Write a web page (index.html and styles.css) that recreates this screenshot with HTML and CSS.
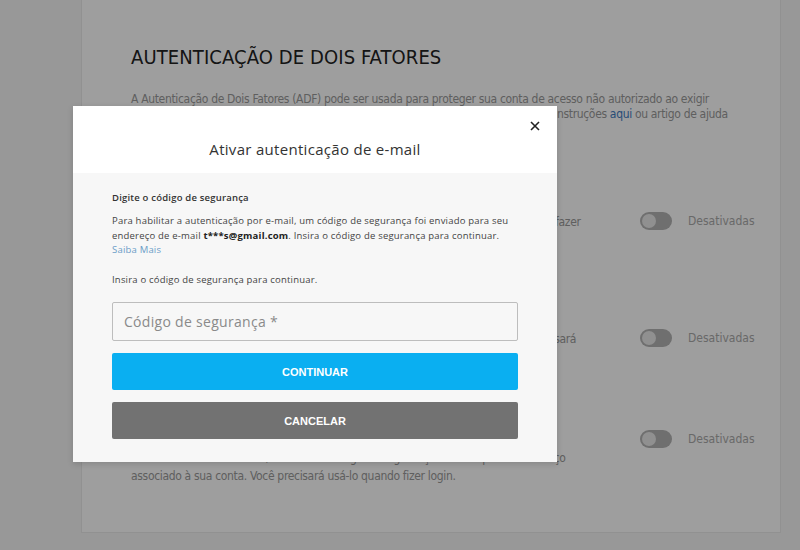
FILE: index.html
```html
<!DOCTYPE html>
<html>
<head>
    <title>Autenticação de dois fatores</title>
    <link rel="stylesheet" href="styles.css">
</head>
<body>
    <div class="page">
        <div class="card">
            <h1>AUTENTICAÇÃO DE DOIS FATORES</h1>
            <p class="intro">A Autenticação de Dois Fatores (ADF) pode ser usada para proteger sua conta de acesso não autorizado ao exigir<br>
                um código de segurança sempre que você fizer login. Você poderá encontrar mais instruções <a href="#">aqui</a> ou artigo de ajuda</p>

            <div class="option option-app">
                <div class="option-text">
                    <h2>AUTENTICAÇÃO POR APLICATIVO AUTENTICADOR</h2>
                    <p>Use um aplicativo autenticador como o Google Authenticator para gerar código ao fazer<br>
                        login na sua conta.</p>
                </div>
                <div class="toggle"><span class="knob"></span></div>
                <span class="state">Desativadas</span>
            </div>

            <div class="option option-sms">
                <div class="option-text">
                    <h2>AUTENTICAÇÃO POR SMS</h2>
                    <p>Enviaremos um código de segurança por SMS para seu celular, que você sempre usará<br>
                        quando fizer login.</p>
                </div>
                <div class="toggle"><span class="knob"></span></div>
                <span class="state">Desativadas</span>
            </div>

            <div class="option option-email">
                <div class="option-text">
                    <h2>AUTENTICAÇÃO POR E-MAIL</h2>
                    <p>Se você não tiver um celular, use a autenticação por e-mail.<br>
                        Sempre que fizer login, enviaremos um código de segurança.<br>
                        Para habilitar esse recurso, confirme o código de segurança enviado para o endereço<br>
                        associado à sua conta. Você precisará usá-lo quando fizer login.</p>
                </div>
                <div class="toggle"><span class="knob"></span></div>
                <span class="state">Desativadas</span>
            </div>
        </div>
    </div>

    <div class="overlay"></div>

    <div class="modal">
        <div class="modal-header">
            <button class="close" aria-label="Fechar">
                <svg width="10" height="10" viewBox="0 0 10 10"><path d="M1 1L9 9M9 1L1 9" stroke="#222" stroke-width="1.6"/></svg>
            </button>
            <h3>Ativar autenticação de e-mail</h3>
        </div>
        <div class="modal-body">
            <p class="label">Digite o código de segurança</p>
            <p class="info">Para habilitar a autenticação por e-mail, um código de segurança foi enviado para seu
                endereço de e-mail <b>t***s@gmail.com</b>. Insira o código de segurança para continuar.
                <br><a href="#">Saiba Mais</a></p>
            <p class="info">Insira o código de segurança para continuar.</p>
            <input class="code" type="text" placeholder="Código de segurança *">
            <button class="btn btn-primary">CONTINUAR</button>
            <button class="btn btn-secondary">CANCELAR</button>
        </div>
    </div>
</body>
</html>
```

FILE: styles.css
```css
body {
    margin: 0;
    background: #f5f5f5;
    font-family: "DejaVu Sans Condensed", "Liberation Sans", sans-serif;
}

.page {
    height: 550px;
    overflow: hidden;
    padding-left: 81px;
}

.card {
    width: 649px;
    height: 487px;
    margin-top: -20px;
    padding: 64px 0 0 49px;
    background: #fff;
    border: 1px solid #ebebeb;
}

.card h1 {
    margin: 0 0 23px;
    font-size: 20px;
    font-weight: normal;
    color: #222;
    letter-spacing: 0.1px;
}

.intro {
    margin: 0;
    width: 620px;
    white-space: nowrap;
    font-size: 12px;
    line-height: 15px;
    letter-spacing: -0.33px;
    color: #999;
}

.intro a {
    color: #3f7cbf;
    text-decoration: none;
}

.option {
    display: flex;
    align-items: center;
}

.option-app {
    margin-top: 71px;
}

.option-sms {
    margin-top: 61px;
}

.option-email {
    margin-top: 27px;
}

.option-text {
    flex: 0 0 509px;
}

.option-text h2 {
    margin: 0 0 2px;
    font-size: 14px;
    line-height: 18px;
    font-weight: normal;
    color: #333;
}

.option-text p {
    margin: 0;
    white-space: nowrap;
    font-size: 12px;
    line-height: 18px;
    letter-spacing: -0.33px;
    color: #999;
}

.toggle {
    width: 32px;
    height: 18px;
    border-radius: 9px;
    background: #b3b3b3;
    display: flex;
    align-items: center;
    padding-left: 2px;
    box-sizing: border-box;
}

.knob {
    width: 14px;
    height: 14px;
    border-radius: 50%;
    background: #e8e8e8;
}

.state {
    margin-left: 16px;
    font-size: 12px;
    color: #aaa;
}

.overlay {
    position: fixed;
    inset: 0;
    background: rgba(0, 0, 0, 0.38);
}

.modal {
    position: absolute;
    top: 106px;
    left: 73px;
    width: 484px;
    font-family: "Open Sans", sans-serif;
    box-shadow: 0 2px 6px rgba(0, 0, 0, 0.15);
}

.modal-header {
    position: relative;
    height: 67px;
    background: #fff;
    box-sizing: border-box;
    padding-top: 33px;
}

.modal-header h3 {
    margin: 0;
    text-align: center;
    font-size: 15px;
    font-weight: normal;
    color: #333;
    letter-spacing: 0.3px;
}

.close {
    position: absolute;
    top: 13px;
    right: 17px;
    padding: 0;
    border: none;
    background: none;
    width: 10px;
    height: 10px;
}

.modal-body {
    background: #f7f7f7;
    padding: 18px 39px 23px;
}

.label {
    margin: 0 0 10px;
    font-size: 9.5px;
    font-weight: 600;
    color: #333;
    letter-spacing: 0.2px;
}

.info {
    margin: 0 0 15px;
    font-size: 9.5px;
    line-height: 14.5px;
    color: #444;
    letter-spacing: 0.2px;
}

.info b {
    color: #222;
}

.info a {
    color: #6a9cc7;
    text-decoration: none;
}

.code {
    display: block;
    width: 100%;
    height: 39px;
    box-sizing: border-box;
    margin-top: 15px;
    padding: 0 11px;
    border: 1px solid #bdbdbd;
    border-radius: 2px;
    background: #f7f7f7;
    font-family: "Open Sans", sans-serif;
    font-size: 14px;
    letter-spacing: 0.3px;
}

.code::placeholder {
    color: #8a8a8a;
}

.btn {
    display: block;
    width: 100%;
    height: 37px;
    margin-top: 12px;
    border: none;
    border-radius: 2px;
    color: #fff;
    font-family: "Liberation Sans", sans-serif;
    font-weight: bold;
    font-size: 11px;
}

.btn-primary {
    background: #0aaff1;
}

.btn-secondary {
    background: #727272;
}
```
